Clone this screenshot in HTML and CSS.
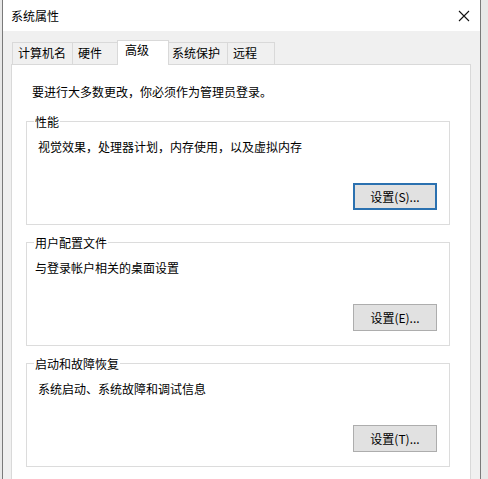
FILE: index.html
```html
<!DOCTYPE html>
<html lang="zh-CN">
<head>
<meta charset="utf-8">
<title>系统属性</title>
<link rel="stylesheet" href="styles.css">
</head>
<body>
<div class="window">
  <div class="titlebar">
    <span class="title">系统属性</span>
    <span class="close">
      <svg width="12" height="12" viewBox="0 0 12 12"><path d="M1 1 L11 11 M11 1 L1 11" stroke="#111" stroke-width="1.1" fill="none"/></svg>
    </span>
  </div>
  <div class="body">
    <div class="tabs">
      <div class="tab">计算机名</div>
      <div class="tab">硬件</div>
      <div class="tab tab-active">高级</div>
      <div class="tab tab-after">系统保护</div>
      <div class="tab">远程</div>
    </div>
    <div class="panel">
      <div class="notice">要进行大多数更改，你必须作为管理员登录。</div>
      <div class="group">
        <div class="group-title">性能</div>
        <div class="desc">视觉效果，处理器计划，内存使用，以及虚拟内存</div>
        <div class="actions"><button class="btn btn-default">设置(S)...</button></div>
      </div>
      <div class="group">
        <div class="group-title">用户配置文件</div>
        <div class="desc desc-tight">与登录帐户相关的桌面设置</div>
        <div class="actions"><button class="btn">设置(E)...</button></div>
      </div>
      <div class="group">
        <div class="group-title">启动和故障恢复</div>
        <div class="desc">系统启动、系统故障和调试信息</div>
        <div class="actions"><button class="btn">设置(T)...</button></div>
      </div>
    </div>
  </div>
</div>
</body>
</html>
```

FILE: styles.css
```css
* { box-sizing: border-box; }
html, body { margin: 0; padding: 0; }
body {
  background: #e8e8e8;
  font-family: "Noto Sans CJK SC", "Noto Sans", sans-serif;
  font-size: 12px;
  color: #000;
  height: 479px;
  overflow: hidden;
}
.window {
  margin-left: 2px;
  width: 479px;
  height: 479px;
  border-left: 1px solid #7a7a7a;
  border-right: 1px solid #7a7a7a;
  background: #f0f0f0;
  display: flex;
  flex-direction: column;
  overflow: hidden;
}
.titlebar {
  flex-shrink: 0;
  height: 31px;
  background: #fff;
  display: flex;
  align-items: center;
  justify-content: space-between;
  padding: 0 10px 0 8px;
}
.title { line-height: 16px; margin-top: 1px; }
.close { display: flex; align-items: center; margin-top: 1px; }
.body {
  flex: 1;
  min-height: 0;
  padding: 9px 0 0 8px;
  display: flex;
  flex-direction: column;
}
.tabs {
  flex-shrink: 0;
  display: flex;
  align-items: flex-end;
  padding-left: 1px;
  height: 24px;
}
.tab {
  flex-shrink: 0;
  height: 22px;
  min-width: 48px;
  padding: 2px 6px 0 5px;
  line-height: 16px;
  border: 1px solid #d9d9d9;
  border-bottom: none;
  background: #f0f0f0;
  margin-left: -1px;
}
.tab:first-child { margin-left: 0; min-width: 60px; }
.tab-active {
  height: 25px;
  min-width: 52px;
  padding: 1px 6px 0 7px;
  margin-left: -3px;
  margin-bottom: -1px;
  background: #fff;
  position: relative;
  z-index: 1;
}
.tab-after { margin-left: -3px; min-width: 62px; }
.panel {
  flex: 1;
  min-height: 0;
  overflow: hidden;
  width: 460px;
  background: #fff;
  border: 1px solid #d9d9d9;
  border-bottom: none;
  padding: 19px 20px 0 14px;
}
.notice {
  line-height: 16px;
  margin-left: 6px;
  margin-bottom: 21px;
}
.group {
  flex-shrink: 0;
  border: 1px solid #dcdcdc;
  height: 104px;
  margin-bottom: 17px;
  display: flex;
  flex-direction: column;
  align-items: flex-start;
}
.group-title {
  line-height: 16px;
  margin: -8px 0 0 7px;
  padding: 0 1px;
  background: #fff;
}
.desc {
  line-height: 16px;
  margin: 9px 0 0 11px;
}
.desc-tight { margin-left: 8px; }
.actions {
  align-self: stretch;
  display: flex;
  justify-content: flex-end;
  padding-right: 12px;
  margin-top: 28px;
}
.btn {
  width: 84px;
  height: 27px;
  background: #e1e1e1;
  border: 1px solid #adadad;
  font-family: inherit;
  font-size: 12px;
  color: #000;
  padding: 0;
  line-height: 16px;
}
.btn-default {
  border: 2px solid #2b71b0;
}
```
